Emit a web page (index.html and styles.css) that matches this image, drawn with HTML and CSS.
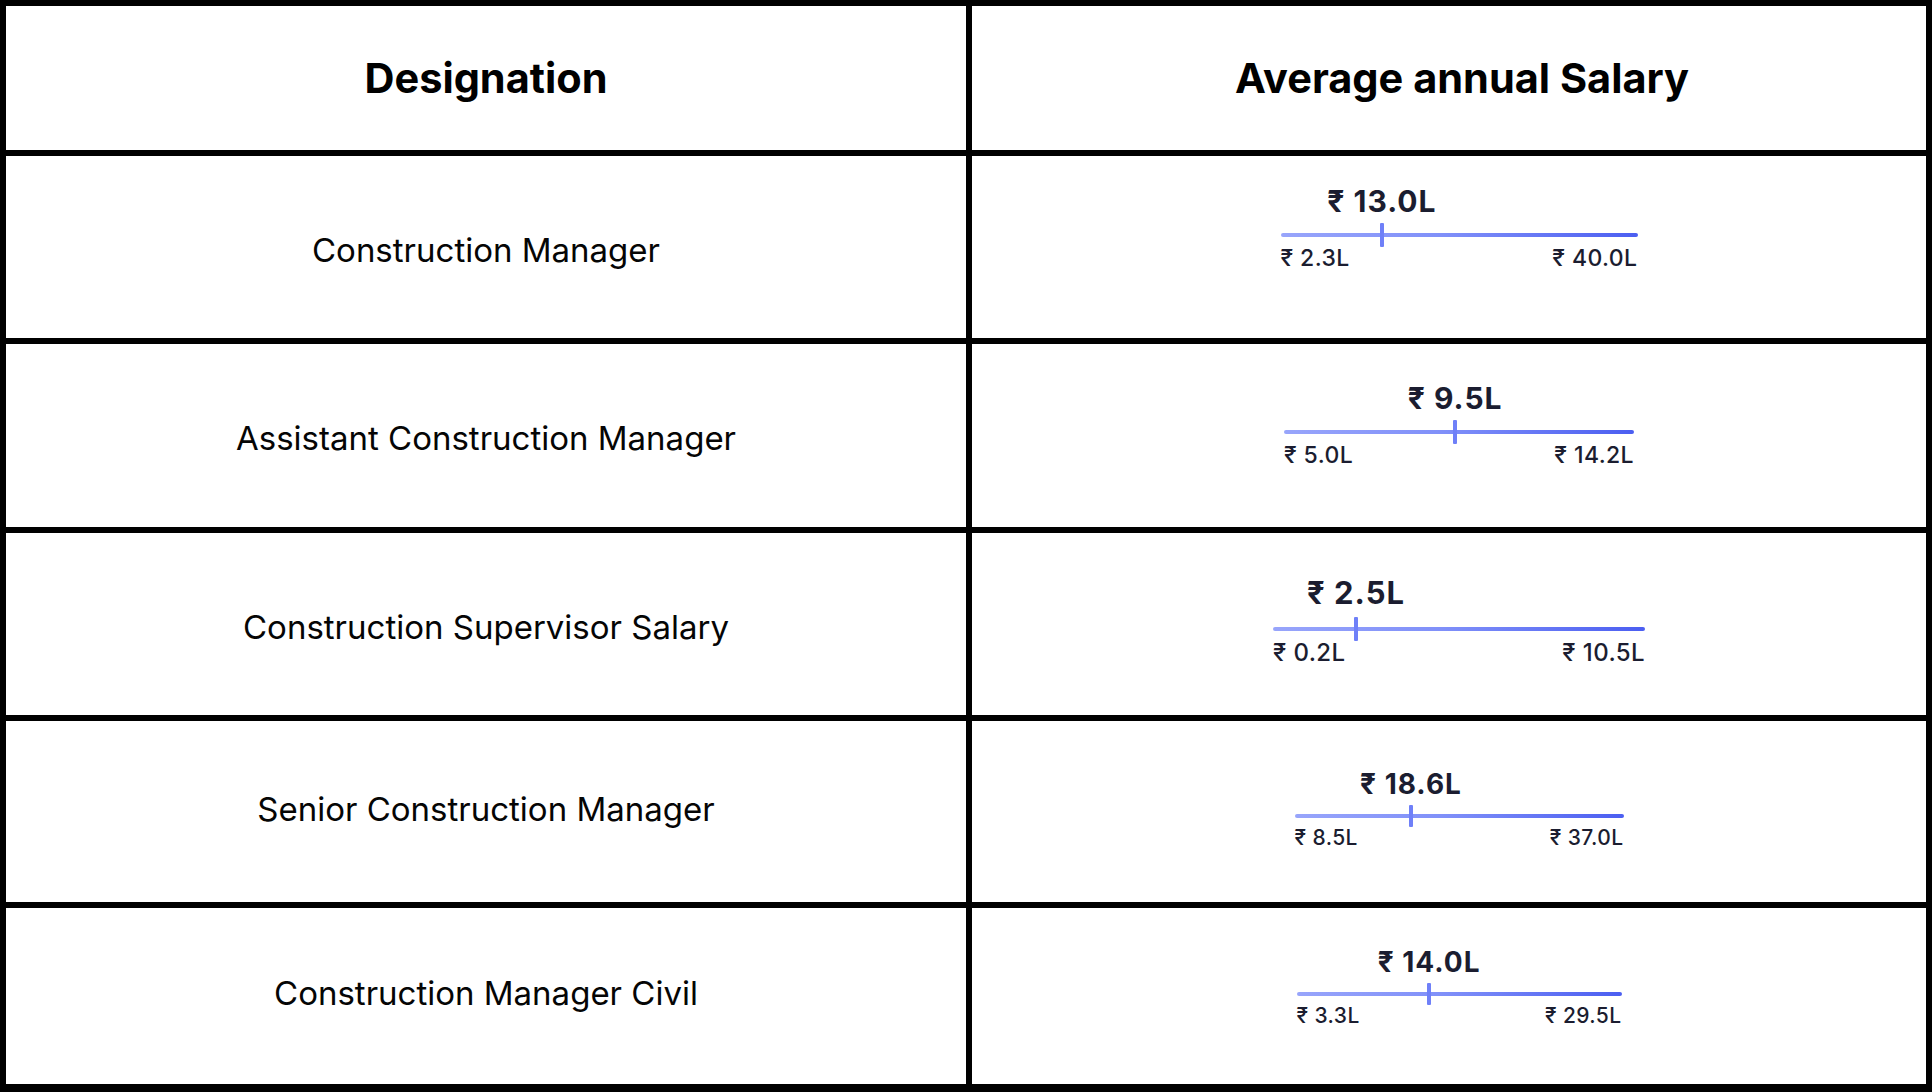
FILE: index.html
```html
<!DOCTYPE html>
<html lang="en">
<head>
<meta charset="utf-8">
<title>Salary table</title>
<link rel="stylesheet" href="styles.css">
</head>
<body>
<div class="table">
  <div class="cell head">Designation</div>
  <div class="cell head head-salary">Average annual Salary</div>

  <div class="cell name">Construction Manager</div>
  <div class="cell salary salary-r1">
    <div class="range" style="--w:357px">
      <div class="avg-row"><span class="avg" style="left:28.4%">₹ 13.0L</span></div>
      <div class="bar"><span class="tick" style="left:28.4%"></span></div>
      <div class="ends"><span>₹ 2.3L</span><span>₹ 40.0L</span></div>
    </div>
  </div>

  <div class="cell name">Assistant Construction Manager</div>
  <div class="cell salary salary-r2">
    <div class="range" style="--w:350px">
      <div class="avg-row"><span class="avg" style="left:48.9%">₹ 9.5L</span></div>
      <div class="bar"><span class="tick" style="left:48.9%"></span></div>
      <div class="ends"><span>₹ 5.0L</span><span>₹ 14.2L</span></div>
    </div>
  </div>

  <div class="cell name">Construction Supervisor Salary</div>
  <div class="cell salary salary-r3">
    <div class="range range-lg" style="--w:372px">
      <div class="avg-row"><span class="avg" style="left:22.3%">₹ 2.5L</span></div>
      <div class="bar"><span class="tick" style="left:22.3%"></span></div>
      <div class="ends"><span>₹ 0.2L</span><span>₹ 10.5L</span></div>
    </div>
  </div>

  <div class="cell name name-up">Senior Construction Manager</div>
  <div class="cell salary salary-r4">
    <div class="range range-sm" style="--w:329px">
      <div class="avg-row"><span class="avg" style="left:35.4%">₹ 18.6L</span></div>
      <div class="bar"><span class="tick" style="left:35.4%"></span></div>
      <div class="ends"><span>₹ 8.5L</span><span>₹ 37.0L</span></div>
    </div>
  </div>

  <div class="cell name name-up">Construction Manager Civil</div>
  <div class="cell salary salary-r5">
    <div class="range range-sm" style="--w:325px">
      <div class="avg-row"><span class="avg" style="left:40.8%">₹ 14.0L</span></div>
      <div class="bar"><span class="tick" style="left:40.8%"></span></div>
      <div class="ends"><span>₹ 3.3L</span><span>₹ 29.5L</span></div>
    </div>
  </div>
</div>
</body>
</html>
```

FILE: styles.css
```css
* { box-sizing: border-box; }

html, body {
  margin: 0;
  padding: 0;
  background: #ffffff;
}

body {
  font-family: Inter, "Noto Sans", "DejaVu Sans", sans-serif;
  color: #000;
}

.table {
  width: 1932px;
  height: 1092px;
  display: grid;
  grid-template-columns: 960px 954px;
  grid-template-rows: 144px 182px 183px 182px 181px 176px;
  gap: 6px;
  padding: 6px 6px 8px 6px;
  background: #000;
}

.cell {
  background: #fff;
  display: flex;
  align-items: center;
  justify-content: center;
}

.head {
  font-size: 41.5px;
  font-weight: 700;
}

.head-salary {
  padding-left: 26px;
}

.name {
  font-size: 33px;
  font-weight: 400;
  color: #050505;
  padding-top: 5px;
}

.name-up {
  padding-top: 0;
  padding-bottom: 6px;
}

.salary {
  padding-left: 20px;
}

.salary-r1 { padding-bottom: 39px; }
.salary-r2 { padding-bottom: 22px; }
.salary-r3 { padding-bottom: 6px; }
.salary-r4 { padding-bottom: 5px; }
.salary-r5 { padding-bottom: 19px; }

.range {
  width: var(--w);
  color: #1b1d30;
}

.avg-row {
  position: relative;
  height: 30px;
  margin-bottom: 7px;
}

.avg {
  position: absolute;
  top: 0;
  transform: translateX(-50%);
  white-space: nowrap;
  font-size: 30px;
  line-height: 30px;
  font-weight: 700;
  letter-spacing: 1px;
}

.bar {
  position: relative;
  height: 24px;
}

.bar::before {
  content: "";
  position: absolute;
  left: 0;
  right: 0;
  top: 10px;
  height: 4px;
  border-radius: 2px;
  background: linear-gradient(90deg, #98a5fb 0%, #8090f9 45%, #4b5ef1 100%);
}

.tick {
  position: absolute;
  top: 0;
  width: 4px;
  height: 24px;
  margin-left: -2px;
  background: #6f80f8;
  border-radius: 1px;
}

.ends {
  display: flex;
  justify-content: space-between;
  font-size: 23px;
  line-height: 23px;
  font-weight: 500;
  letter-spacing: 0.4px;
}

.range-lg .avg-row {
  height: 31px;
  margin-bottom: 9px;
}

.range-lg .avg {
  font-size: 31px;
  line-height: 31px;
}

.range-lg .ends {
  font-size: 24px;
  line-height: 24px;
}

.range-sm .avg-row {
  height: 28px;
  margin-bottom: 7px;
}

.range-sm .avg {
  font-size: 28px;
  line-height: 28px;
}

.range-sm .ends {
  font-size: 21px;
  line-height: 21px;
}

.range-sm .bar {
  height: 22px;
}

.range-sm .bar::before {
  top: 9px;
}

.range-sm .tick {
  height: 22px;
}
```
